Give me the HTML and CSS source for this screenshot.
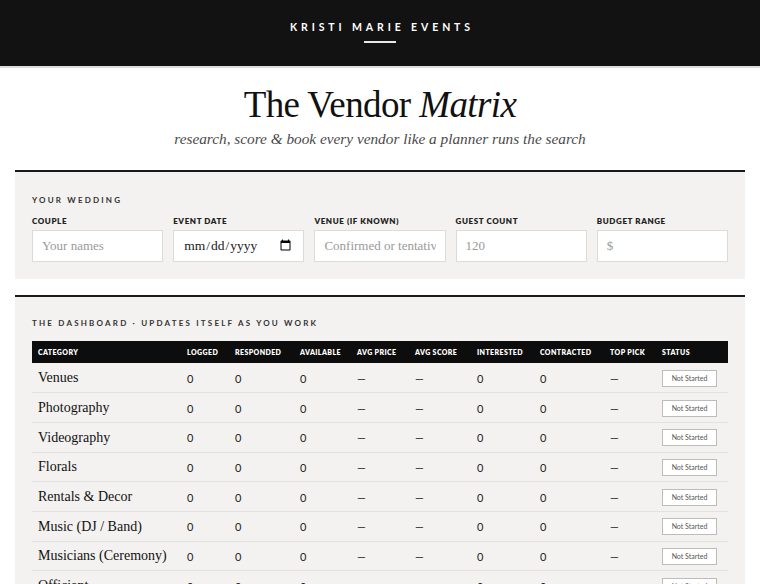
FILE: index.html
```html
<!DOCTYPE html>
<html lang="en">
<head>
<meta charset="utf-8">
<title>The Vendor Matrix</title>
<link rel="stylesheet" href="styles.css">
</head>
<body>
<header class="topbar">
  <div class="brand">KRISTI MARIE EVENTS</div>
  <div class="brand-rule"></div>
</header>

<div class="hero">
  <h1 class="title">The Vendor <em>Matrix</em></h1>
  <p class="subtitle">research, score &amp; book every vendor like a planner runs the search</p>
</div>

<main class="wrap">
  <section class="panel">
    <div class="eyebrow">YOUR WEDDING</div>
    <div class="fields">
      <label class="field"><span class="field-label">COUPLE</span><input class="input" type="text" placeholder="Your names"></label>
      <label class="field"><span class="field-label">EVENT DATE</span><input class="input input-date" type="date"></label>
      <label class="field"><span class="field-label">VENUE (IF KNOWN)</span><input class="input" type="text" placeholder="Confirmed or tentative"></label>
      <label class="field"><span class="field-label">GUEST COUNT</span><input class="input" type="text" placeholder="120"></label>
      <label class="field"><span class="field-label">BUDGET RANGE</span><input class="input" type="text" placeholder="$"></label>
    </div>
  </section>

  <section class="panel panel-dash">
    <div class="eyebrow eyebrow-dash">THE DASHBOARD · UPDATES ITSELF AS YOU WORK</div>
    <table class="matrix">
      <colgroup>
        <col class="c-cat"><col class="c-log"><col class="c-resp"><col class="c-avail"><col class="c-price"><col class="c-score"><col class="c-int"><col class="c-con"><col class="c-top"><col class="c-status">
      </colgroup>
      <thead>
        <tr><th>CATEGORY</th><th>LOGGED</th><th>RESPONDED</th><th>AVAILABLE</th><th>AVG PRICE</th><th>AVG SCORE</th><th>INTERESTED</th><th>CONTRACTED</th><th>TOP PICK</th><th>STATUS</th></tr>
      </thead>
      <tbody>
        <tr><td class="cat">Venues</td><td>0</td><td>0</td><td>0</td><td>—</td><td>—</td><td>0</td><td>0</td><td>—</td><td><span class="badge">Not Started</span></td></tr>
        <tr><td class="cat">Photography</td><td>0</td><td>0</td><td>0</td><td>—</td><td>—</td><td>0</td><td>0</td><td>—</td><td><span class="badge">Not Started</span></td></tr>
        <tr><td class="cat">Videography</td><td>0</td><td>0</td><td>0</td><td>—</td><td>—</td><td>0</td><td>0</td><td>—</td><td><span class="badge">Not Started</span></td></tr>
        <tr><td class="cat">Florals</td><td>0</td><td>0</td><td>0</td><td>—</td><td>—</td><td>0</td><td>0</td><td>—</td><td><span class="badge">Not Started</span></td></tr>
        <tr><td class="cat">Rentals &amp; Decor</td><td>0</td><td>0</td><td>0</td><td>—</td><td>—</td><td>0</td><td>0</td><td>—</td><td><span class="badge">Not Started</span></td></tr>
        <tr><td class="cat">Music (DJ / Band)</td><td>0</td><td>0</td><td>0</td><td>—</td><td>—</td><td>0</td><td>0</td><td>—</td><td><span class="badge">Not Started</span></td></tr>
        <tr><td class="cat">Musicians (Ceremony)</td><td>0</td><td>0</td><td>0</td><td>—</td><td>—</td><td>0</td><td>0</td><td>—</td><td><span class="badge">Not Started</span></td></tr>
        <tr><td class="cat">Officiant</td><td>0</td><td>0</td><td>0</td><td>—</td><td>—</td><td>0</td><td>0</td><td>—</td><td><span class="badge">Not Started</span></td></tr>
        <tr><td class="cat">Hair &amp; Makeup</td><td>0</td><td>0</td><td>0</td><td>—</td><td>—</td><td>0</td><td>0</td><td>—</td><td><span class="badge">Not Started</span></td></tr>
      </tbody>
    </table>
  </section>
</main>
</body>
</html>
```

FILE: styles.css
```css
* { box-sizing: border-box; }

html, body {
  margin: 0;
  padding: 0;
  background: #ffffff;
  color: #111;
  font-family: "Liberation Serif", "Times New Roman", serif;
}

.topbar {
  height: 68px;
  background: #121212;
  border-bottom: 2px solid #dcdcdc;
  display: flex;
  flex-direction: column;
  align-items: center;
  padding-top: 20px;
}

.brand {
  font-family: Lato, "Liberation Sans", sans-serif;
  font-weight: 700;
  font-size: 10.5px;
  line-height: 14px;
  letter-spacing: 3.9px;
  color: #ffffff;
  margin-right: -3.9px;
}

.brand-rule {
  width: 32px;
  height: 2px;
  background: #e8e8e8;
  margin-top: 7px;
}

.hero {
  text-align: center;
}

.title {
  margin: 15px 0 0;
  font-family: "Liberation Serif", "Times New Roman", serif;
  font-weight: 400;
  font-size: 37px;
  line-height: 44px;
  letter-spacing: -0.6px;
  color: #111;
}

.title em {
  font-style: italic;
}

.subtitle {
  margin: 2px 0 0;
  font-style: italic;
  font-size: 15.3px;
  line-height: 20px;
  color: #4a4a4a;
}

.wrap {
  padding: 0 15px;
  margin-top: 21px;
}

.panel {
  background: #f3f2f0;
  border-top: 2px solid #1a1a1a;
  padding: 22px 17px 17px;
}

.panel-dash {
  margin-top: 16px;
  padding-top: 20px;
}

.eyebrow {
  font-family: Lato, "Liberation Sans", sans-serif;
  font-weight: 700;
  font-size: 8px;
  line-height: 12px;
  letter-spacing: 2.2px;
  color: #333;
}

.eyebrow-dash {
  margin-bottom: 12px;
}

.fields {
  display: grid;
  grid-template-columns: repeat(5, 1fr);
  column-gap: 10px;
  margin-top: 9px;
}

.field {
  display: flex;
  flex-direction: column;
  gap: 3px;
  min-width: 0;
}

.field-label {
  font-family: Lato, "Liberation Sans", sans-serif;
  font-weight: 800;
  font-size: 8px;
  line-height: 12px;
  letter-spacing: 0.6px;
  color: #222;
}

.input {
  width: 100%;
  height: 32px;
  background: #fff;
  border: 1px solid #dcdbd8;
  border-radius: 0;
  padding: 0 9px;
  font-family: "Liberation Serif", "Times New Roman", serif;
  font-size: 13px;
  color: #222;
  outline: none;
}

.input::placeholder {
  color: #9a9a9a;
}

.input-date {
  color: #222;
  font-size: 13.5px;
}

.matrix {
  width: 100%;
  border-collapse: collapse;
  table-layout: fixed;
}

.c-cat { width: 149px; }
.c-log { width: 48px; }
.c-resp { width: 65px; }
.c-avail { width: 57px; }
.c-price { width: 58px; }
.c-score { width: 62px; }
.c-int { width: 63px; }
.c-con { width: 70px; }
.c-top { width: 52px; }
.c-status { width: 72px; }

.matrix th {
  background: #0d0d0d;
  color: #fff;
  font-family: Lato, "Liberation Sans", sans-serif;
  font-weight: 800;
  font-size: 7px;
  letter-spacing: 0.4px;
  text-align: left;
  height: 22px;
  padding: 0 6px;
  white-space: nowrap;
}

.matrix td {
  height: 29.7px;
  padding: 1px 6px 0;
  border-bottom: 1px solid #e4e2de;
  font-family: Lato, "Liberation Sans", sans-serif;
  font-size: 11px;
  color: #222;
  white-space: nowrap;
}

.matrix td.cat {
  font-family: "Liberation Serif", "Times New Roman", serif;
  font-size: 14px;
  color: #111;
}

.badge {
  display: inline-block;
  width: 55px;
  height: 17px;
  line-height: 15px;
  text-align: center;
  background: #fff;
  border: 1px solid #bdbcb9;
  font-family: Lato, "Liberation Sans", sans-serif;
  font-size: 7px;
  color: #555;
}
```
